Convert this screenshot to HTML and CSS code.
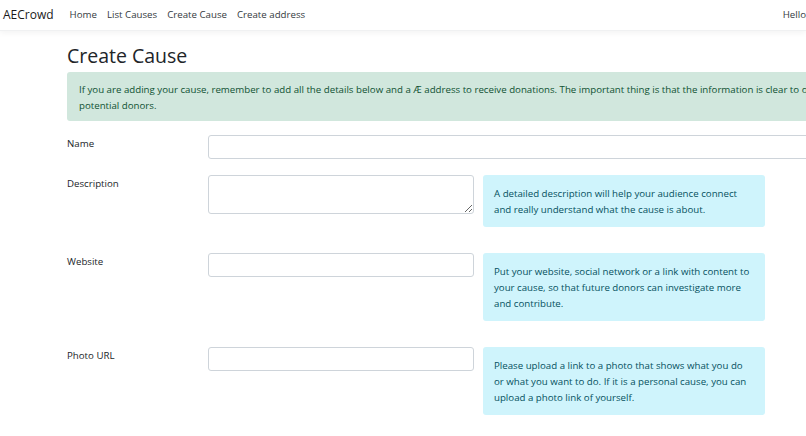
FILE: index.html
```html
<!DOCTYPE html>
<html lang="en">
<head>
<meta charset="utf-8">
<title>Create Cause - AECrowd</title>
<link rel="stylesheet" href="styles.css">
</head>
<body>
<header class="navbar">
  <a class="brand" href="#">AECrowd</a>
  <nav class="nav-links">
    <a class="nav-link" href="#">Home</a>
    <a class="nav-link" href="#">List Causes</a>
    <a class="nav-link" href="#">Create Cause</a>
    <a class="nav-link" href="#">Create address</a>
  </nav>
  <span class="hello">Hello</span>
</header>
<main class="container">
  <h2 class="title">Create Cause</h2>
  <div class="alert alert-success">If you are adding your cause, remember to add all the details below and a Æ address to receive donations. The important thing is that the information is clear to our potential donors.</div>
  <form class="form">
    <div class="row row-name">
      <label class="label" for="name">Name</label>
      <input class="input input-wide" id="name" type="text">
    </div>
    <div class="row">
      <label class="label" for="desc">Description</label>
      <textarea class="input textarea" id="desc"></textarea>
      <div class="info">A detailed description will help your audience connect and really understand what the cause is about.</div>
    </div>
    <div class="row">
      <label class="label" for="web">Website</label>
      <input class="input" id="web" type="text">
      <div class="info">Put your website, social network or a link with content to your cause, so that future donors can investigate more and contribute.</div>
    </div>
    <div class="row">
      <label class="label" for="photo">Photo URL</label>
      <input class="input" id="photo" type="text">
      <div class="info">Please upload a link to a photo that shows what you do or what you want to do. If it is a personal cause, you can upload a photo link of yourself.</div>
    </div>
  </form>
</main>
</body>
</html>
```
FILE: styles.css
```css
html, body {
  margin: 0;
  padding: 0;
  overflow: hidden;
  background: #fff;
}
body {
  font-family: "Open Sans", "Noto Sans", sans-serif;
  font-size: 9.7px;
  line-height: 16px;
  color: #212529;
}
.navbar {
  display: flex;
  align-items: center;
  height: 31px;
  padding-left: 3px;
  background: #fff;
  border-bottom: 1px solid #f0f1f2;
  box-shadow: 0 2px 6px rgba(0, 0, 0, 0.05);
  box-sizing: border-box;
}
.brand {
  font-size: 12px;
  color: #1a1a1a;
  text-decoration: none;
  margin-right: 11px;
}
.nav-links {
  display: flex;
}
.nav-link {
  padding: 0 5px;
  color: #343a40;
  text-decoration: none;
}
.hello {
  margin-left: auto;
  color: #343a40;
  white-space: nowrap;
}
.container {
  padding-left: 67px;
  width: 792px;
}
.title {
  font-size: 19.5px;
  font-weight: 500;
  line-height: 25px;
  margin: 12px 0 4px;
  color: #212529;
}
.alert {
  border-radius: 3px;
  padding: 10px 12px 7px;
  margin-bottom: 14px;
}
.alert-success {
  background: #d1e7dd;
  color: #0f5132;
}
.row {
  display: grid;
  grid-template-columns: 141px 266px 291px;
  align-items: start;
  margin-bottom: 16px;
}
.label {
  grid-column: 1;
  display: block;
  padding-top: 1px;
}
.input {
  grid-column: 2;
  height: 24px;
  box-sizing: border-box;
  border: 1px solid #ced4da;
  border-radius: 3px;
  background: #fff;
  font: inherit;
  margin: 0;
  padding: 3px 8px;
}
.input-wide {
  grid-column: 2 / 4;
  width: 651px;
}
.textarea {
  height: 39px;
  resize: vertical;
}
.info {
  grid-column: 3;
  margin-left: 9px;
  background: #cff4fc;
  color: #055160;
  border-radius: 3px;
  padding: 11px 11px 9px;
  margin-bottom: 10px;
}
```
